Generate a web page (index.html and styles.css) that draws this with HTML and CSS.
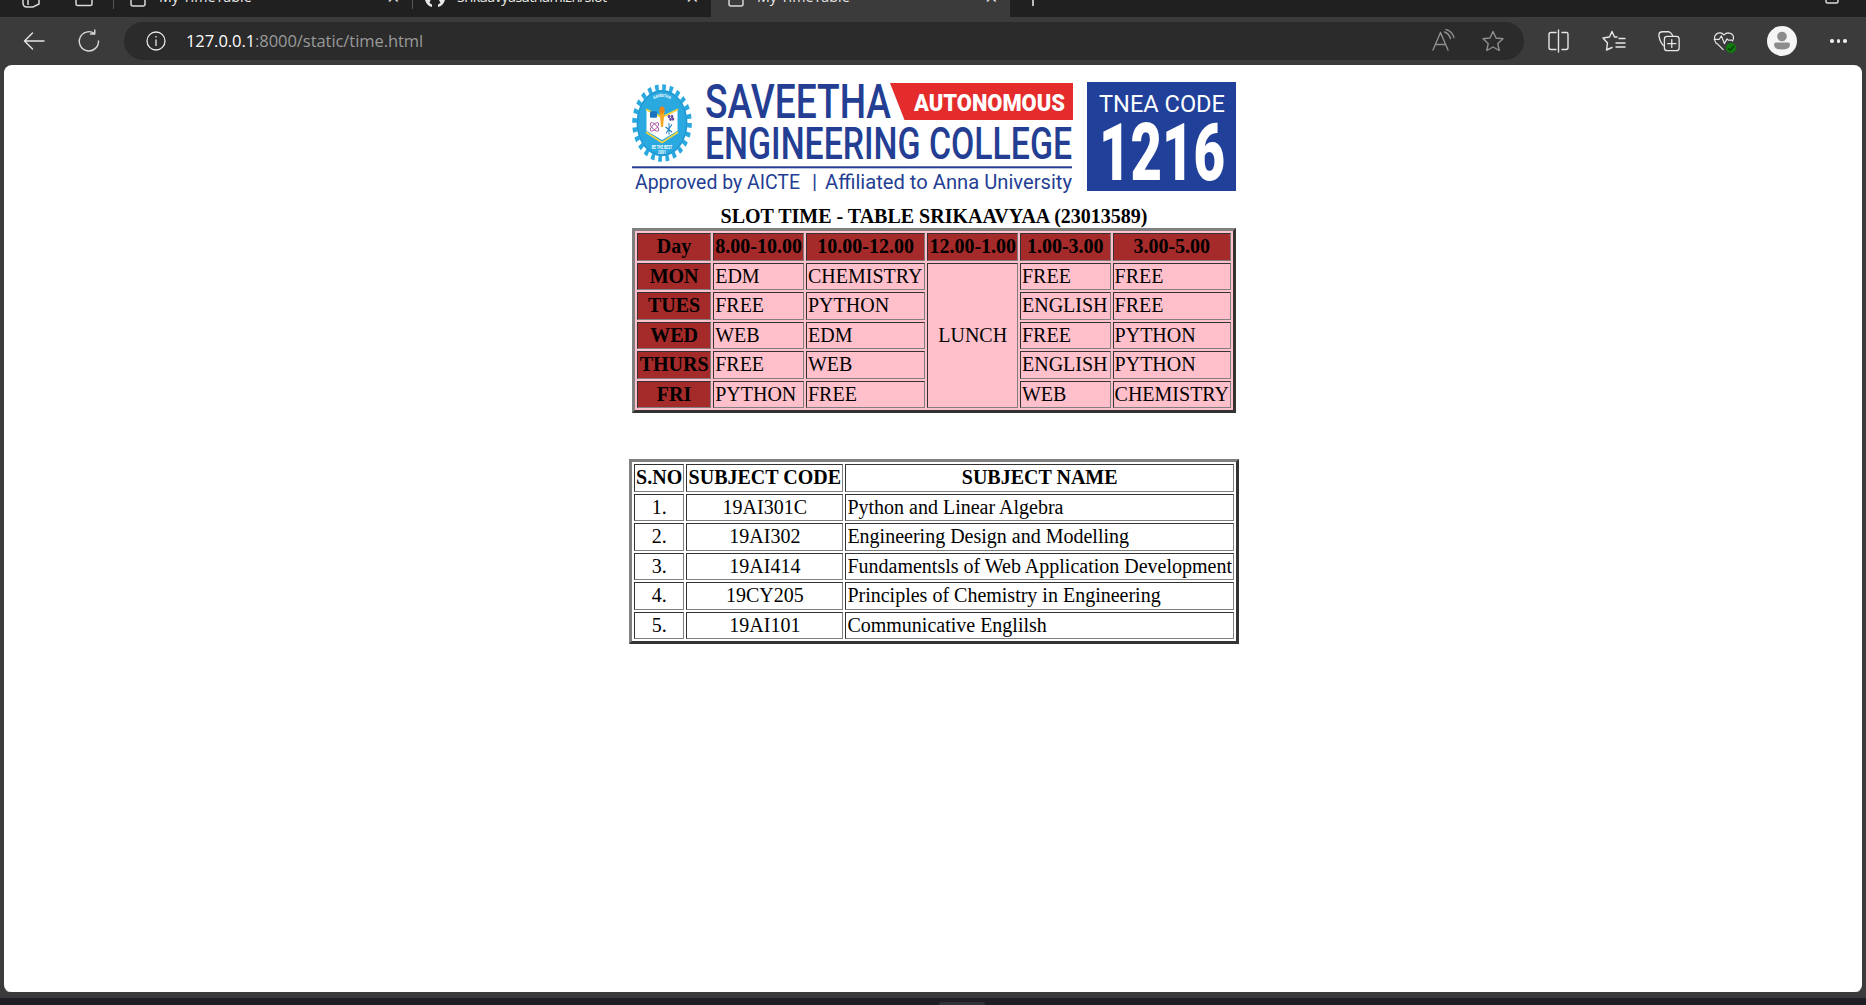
FILE: index.html
```html
<!DOCTYPE html>
<html lang="en">
<head>
<meta charset="utf-8">
<title>My TimeTable</title>
<link rel="stylesheet" href="styles.css">
</head>
<body>
<div class="tabstrip">
  <div class="strip-start">
    <svg class="cut-icon" width="24" height="17" viewBox="0 0 24 17"><path d="M4 0V3Q4 7 8 7H14L20 4V0M9 0V5" /></svg>
    <svg class="cut-icon tabs-icon" width="20" height="17" viewBox="0 0 20 17"><path d="M1 0V4Q1 5.500 2.500 5.500H15.500Q17 5.500 17 4V0" /></svg>
  </div>
  <div class="tab">
    <svg class="cut-icon" width="18" height="17" viewBox="0 0 18 17"><path d="M2 0V4Q2 6 4 6H14Q16 6 16 4V0" /></svg>
    <span class="tab-label">My TimeTable</span>
    <span class="tab-close">×</span>
  </div>
  <div class="tab tab-repo">
    <svg class="cut-icon" width="20" height="17" viewBox="0 0 20 17"><path class="solid" d="M0 0H5.500L4.500 3L7 4.500V7Q2 6 0 0ZM14 0H20Q18 6 13 7V4.500L15.500 3Z" /></svg>
    <span class="tab-label tab-label-narrow">Srikaavyasathamizh/slot</span>
    <span class="tab-close">×</span>
  </div>
  <div class="tab tab-active">
    <svg class="cut-icon" width="18" height="17" viewBox="0 0 18 17"><path d="M2 0V4Q2 6 4 6H14Q16 6 16 4V0" /></svg>
    <span class="tab-label">My TimeTable</span>
    <span class="tab-close">×</span>
  </div>
  <div class="tab-plus"></div>
  <div class="strip-end">
    <svg class="cut-icon" width="14" height="17" viewBox="0 0 14 17"><path d="M1 0V1.500Q1 3 2.500 3H11.500Q13 3 13 1.500V0" /></svg>
  </div>
</div>

<div class="toolbar">
  <svg class="tool tool-back" width="24" height="24" viewBox="0 0 24 24"><path d="M22 12H2.500M10.500 4L2.500 12L10.500 20" /></svg>
  <svg class="tool tool-reload" width="24" height="24" viewBox="0 0 24 24"><path d="M17.500 4.500A9.600 9.600 0 1 0 21.500 12M17.800 1V5H13.500" /></svg>
  <div class="address">
    <svg class="info" width="20" height="20" viewBox="0 0 20 20"><circle cx="10" cy="10" r="9" /><path d="M10 8.500V15M10 5V6.500" /></svg>
    <div class="url"><span class="url-host">127.0.0.1</span>:8000/static/time.html</div>
    <svg class="tool dim read" width="24" height="24" viewBox="0 0 24 24"><path d="M2 21L9.500 3.500L17 21M4.700 15.500H14.300M13.500 3Q18 4.500 19.500 9.500M15 0.500Q21 2 23 8.500" /></svg>
    <svg class="tool dim star" width="24" height="24" viewBox="0 0 24 24"><path d="M12 2.500L15 9L22 9.800L16.800 14.500L18.200 21.500L12 18L5.800 21.500L7.200 14.500L2 9.800L9 9Z" /></svg>
  </div>
  <svg class="tool tool-split" width="24" height="24" viewBox="0 0 24 24"><path d="M9 3.500H4Q2 3.500 2 5.500V18.500Q2 20.500 4 20.500H9M11.500 1V23M15 3.500H20Q21 3.500 21 5.500V18.500Q21 20.500 19 20.500H15" /></svg>
  <svg class="tool tool-gap" width="24" height="24" viewBox="0 0 24 24"><path d="M10 2.500L12.500 8H15M17 9.500H23M14 14H23M14 18H23M10 2.500L7.500 8L1 9L5.500 14L4.500 21L10 18.500" /></svg>
  <svg class="tool tool-gap" width="24" height="24" viewBox="-1 -1 26 26"><path d="M6 17Q2 13 1 6Q1 2 5 2L12 2Q14 2.500 16 6" /><rect x="7" y="7" width="16" height="15.500" rx="3" /><path d="M15 10.500V19M10.500 14.800H19.500" /></svg>
  <div class="health tool-gap">
    <svg class="tool" width="24" height="24" viewBox="-2 -2 28 28"><path d="M3 15Q0 11 1 7Q3 2 8 2.500Q10.500 3 12 5Q14 2.500 17 2.500Q22 3 23 7Q23.500 10 22 12M0.500 10H6.500L9 6L12.500 15L15.500 9.500L17 11H21M4 15L11 22" /></svg>
    <span class="health-badge"><svg width="10" height="10" viewBox="0 0 10 10"><path d="M2 5.300L4.200 7.300L8 3" /></svg></span>
  </div>
  <div class="avatar"><svg width="30" height="30" viewBox="0 0 30 30"><circle cx="15" cy="10.500" r="4.800" /><path d="M7 18.500Q7 16.500 9 16.500H21Q23 16.500 23 18.500Q23 23.500 15 23.500Q7 23.500 7 18.500Z" /></svg></div>
  <div class="dots"><i></i><i></i><i></i></div>
</div>

<main class="page">
  <svg class="logo" width="604" height="109" viewBox="0 0 604 109" role="img" aria-label="Saveetha Engineering College">
    <g class="emblem" transform="translate(30 41) scale(1 1.300)">
      <circle class="gear-teeth" r="27.300" />
      <circle class="gear" r="25.500" />
      <circle class="gear-line" r="24.500" />
      <path class="page-left" d="M-15.500 -10L0 -4L0 13L-15.500 6Z" />
      <path class="page-right" d="M15.500 -10L0 -4L0 13L15.500 6Z" />
      <path class="chevron" d="M-16 7L0 15L16 7M-16 -10.500L0 -4.500L16 -10.500" />
      <rect class="mon" x="-12" y="-9" width="7" height="5" rx="1" />
      <path class="torch" d="M-2.500 -9H2.500L1 3H-1Z" />
      <circle class="torch-top" cy="-10" r="2.600" />
      <circle class="grape" cx="7" cy="-5" r="1.300" /><circle class="grape" cx="10" cy="-5" r="1.300" /><circle class="grape" cx="8.500" cy="-2.800" r="1.300" /><circle class="grape" cx="11" cy="-3" r="1.300" />
      <ellipse class="atom" cx="-7.500" cy="3" rx="5" ry="2" transform="rotate(35 -7.500 3)" />
      <ellipse class="atom" cx="-7.500" cy="3" rx="5" ry="2" transform="rotate(-35 -7.500 3)" />
      <path class="flake" d="M3.500 3L10 7M10 1L4 8M7 0V9" />
      <path id="arcTop" class="none" d="M-20 0A20 20 0 0 1 20 0" />
      <text class="emblem-text"><textPath href="#arcTop" startOffset="50%">SAVEETHA</textPath></text>
      <text class="emblem-text" y="20" x="0">BE THE BEST</text>
      <text class="emblem-text" y="23.800" x="0">2001</text>
    </g>
    <text class="logo-blue" x="73" y="36.300" font-size="48" textLength="186" lengthAdjust="spacingAndGlyphs">SAVEETHA</text>
    <path class="logo-red" d="M258 1H441V38H272.500Z" />
    <text class="logo-white logo-heavy" x="282" y="28.700" font-size="24" textLength="151" lengthAdjust="spacingAndGlyphs">AUTONOMOUS</text>
    <text class="logo-blue" x="73" y="77.300" font-size="45" textLength="367" lengthAdjust="spacingAndGlyphs">ENGINEERING COLLEGE</text>
    <rect class="logo-rule" x="0" y="84.300" width="440" height="2" />
    <text class="logo-blue logo-thin" x="3" y="107" font-size="21" textLength="165" lengthAdjust="spacingAndGlyphs">Approved by AICTE</text>
    <text class="logo-blue logo-thin" x="180" y="107" font-size="21">|</text>
    <text class="logo-blue logo-thin" x="193" y="107" font-size="21" textLength="247" lengthAdjust="spacingAndGlyphs">Affiliated to Anna University</text>
    <rect class="logo-box" x="455" y="0" width="149" height="109" />
    <text class="logo-white" x="467" y="29.700" font-size="23.500" textLength="126" lengthAdjust="spacingAndGlyphs">TNEA CODE</text>
    <text class="logo-white logo-heavy" x="467" y="98" font-size="80" textLength="126" lengthAdjust="spacingAndGlyphs">1216</text>
  </svg>

  <h1 class="slot-title">SLOT TIME - TABLE SRIKAAVYAA (23013589)</h1>

  <table class="grid slot">
    <colgroup><col class="s1"><col class="s2"><col class="s3"><col class="s4"><col class="s5"><col class="s6"></colgroup>
    <tr><th>Day</th><th>8.00-10.00</th><th>10.00-12.00</th><th>12.00-1.00</th><th>1.00-3.00</th><th>3.00-5.00</th></tr>
    <tr><th>MON</th><td>EDM</td><td>CHEMISTRY</td><td rowspan="5" class="lunch">LUNCH</td><td>FREE</td><td>FREE</td></tr>
    <tr><th>TUES</th><td>FREE</td><td>PYTHON</td><td>ENGLISH</td><td>FREE</td></tr>
    <tr><th>WED</th><td>WEB</td><td>EDM</td><td>FREE</td><td>PYTHON</td></tr>
    <tr><th>THURS</th><td>FREE</td><td>WEB</td><td>ENGLISH</td><td>PYTHON</td></tr>
    <tr><th>FRI</th><td>PYTHON</td><td>FREE</td><td>WEB</td><td>CHEMISTRY</td></tr>
  </table>

  <table class="grid subjects">
    <colgroup><col class="c1"><col class="c2"><col class="c3"></colgroup>
    <tr><th>S.NO</th><th>SUBJECT CODE</th><th>SUBJECT NAME</th></tr>
    <tr><td class="mid">1.</td><td class="mid">19AI301C</td><td>Python and Linear Algebra</td></tr>
    <tr><td class="mid">2.</td><td class="mid">19AI302</td><td>Engineering Design and Modelling</td></tr>
    <tr><td class="mid">3.</td><td class="mid">19AI414</td><td>Fundamentsls of Web Application Development</td></tr>
    <tr><td class="mid">4.</td><td class="mid">19CY205</td><td>Principles of Chemistry in Engineering</td></tr>
    <tr><td class="mid">5.</td><td class="mid">19AI101</td><td>Communicative Englilsh</td></tr>
  </table>
</main>

<div class="bottom-band"></div>
<div class="taskbar"><div class="task-notch"></div></div>
</body>
</html>
```
FILE: styles.css
```css
* { box-sizing: border-box; }
html, body { margin: 0; height: 100%; }
body {
  display: flex;
  flex-direction: column;
  height: 1005px;
  overflow: hidden;
  background: #3b3b3b;
  font-family: "Liberation Serif", serif;
}

/* Tab strip, cut off by the top of the window */
.tabstrip {
  display: flex;
  height: 17px;
  flex: none;
  overflow: hidden;
  align-items: flex-start;
  background: #202020;
  font-family: "Open Sans", sans-serif;
  color: #e8e8e8;
}
.cut-icon { flex: none; fill: none; stroke: #d8d8d8; stroke-width: 1.5; }
.cut-icon .solid { fill: #e8e8e8; stroke: none; }
.strip-start { display: flex; width: 113px; padding-left: 19px; gap: 32px; flex: none; }
.tab {
  display: flex;
  width: 299px;
  height: 17px;
  flex: none;
  padding-left: 15px;
  gap: 12px;
  border-left: 1px solid #555;
  border-image: linear-gradient(#555 9px, transparent 9px) 1;
}
.tab-repo { padding-left: 12px; }
.tab-active {
  background: #3b3b3b;
  border-left: 0;
  border-image: none;
  padding-left: 16px;
}
.tab-label {
  font-size: 14.300px;
  line-height: 20px;
  margin-top: -13px;
  flex: 1;
  white-space: nowrap;
}
.tab-label-narrow { letter-spacing: -0.500px; }
.tab-close {
  font-size: 22px;
  line-height: 22px;
  margin-top: -15px;
  width: 25px;
  color: #ddd;
}
.tab-plus {
  width: 2px;
  height: 6px;
  margin-left: 22px;
  flex: none;
  background: #bbb;
}
.strip-end { margin-left: auto; margin-right: 27px; flex: none; }

/* Toolbar */
.toolbar {
  display: flex;
  align-items: center;
  height: 48px;
  flex: none;
  padding-left: 22px;
  background: #3b3b3b;
}
.tool { flex: none; fill: none; stroke: #e6e6e6; stroke-width: 1.400; stroke-linecap: round; stroke-linejoin: round; }
.tool.dim { stroke: #8f8f8f; }
.tool-reload { margin-left: 31px; stroke: #d8d8d8; }
.address {
  display: flex;
  align-items: center;
  width: 1400px;
  height: 38px;
  flex: none;
  margin-left: 23px;
  padding: 0 19px 0 22px;
  border-radius: 19px;
  background: #2b2b2b;
}
.info { flex: none; fill: none; stroke: #e8e8e8; stroke-width: 1.300; }
.url {
  margin-left: 20px;
  margin-bottom: 2px;
  flex: 1;
  font-family: "Open Sans", sans-serif;
  font-size: 16.500px;
  letter-spacing: -0.060px;
  color: #9a9a9a;
  white-space: nowrap;
}
.url-host { color: #fff; }
.star { margin-left: 26px; }
.tool-split { margin-left: 23px; }
.tool-gap { margin-left: 31px; }
.health { position: relative; width: 24px; height: 24px; flex: none; }
.health .tool { display: block; }
.health-badge {
  position: absolute;
  right: 0;
  bottom: 0;
  width: 10px;
  height: 10px;
  display: flex;
  align-items: center;
  justify-content: center;
  border-radius: 50%;
  background: #107c10;
}
.health-badge svg { fill: none; stroke: #0b3f0b; stroke-width: 1.500; }
.avatar {
  width: 30px;
  height: 30px;
  margin-left: 31px;
  flex: none;
  border-radius: 50%;
  background: #f5f5f5;
}
.avatar svg { display: block; fill: #8c8c8c; }
.dots { display: flex; gap: 3.200px; margin-left: 33px; flex: none; }
.dots i { width: 3.500px; height: 3.500px; border-radius: 50%; background: #eee; }

/* Page */
.page {
  display: flex;
  flex-direction: column;
  align-items: center;
  height: 927px;
  flex: none;
  margin: 0 4px;
  padding: 17px 0 0 2px;
  border-radius: 8px;
  background: #fff;
  box-shadow: 0 1px 0 #bdbdbd;
}
.logo { display: block; flex: none; overflow: visible; }
.logo text { font-family: Roboto, sans-serif; }
.logo-blue { fill: #233e93; font-weight: 500; }
.logo .logo-thin { font-weight: 400; }
.logo-white { fill: #fff; font-weight: 400; }
.logo .logo-heavy { font-weight: 900; }
.logo-red { fill: #e32c2b; }
.logo-rule { fill: #233e93; }
.logo-box { fill: #21409a; }
.gear-teeth { fill: none; stroke: #29a9e0; stroke-width: 5; stroke-dasharray: 3.600 3.550; }
.gear { fill: #29a9e0; }
.gear-line { fill: none; stroke: #1b75bb; stroke-width: 0.400; }
.page-left, .page-right { fill: #fff; }
.chevron { fill: none; stroke: #f7d33c; stroke-width: 1.500; }
.mon { fill: #1c75bc; }
.torch { fill: #f7a823; }
.torch-top { fill: #e8861d; }
.grape { fill: #6c4a9e; }
.atom { fill: none; stroke: #a2469a; stroke-width: 0.700; }
.flake { fill: none; stroke: #2484c6; stroke-width: 1; }
.none { fill: none; }
.logo .emblem-text { font-size: 3.400px; fill: #fff; font-weight: 700; text-anchor: middle; }

.slot-title {
  margin: 14px 0 0;
  font-size: 20px;
  line-height: 23px;
  font-weight: 700;
  text-align: center;
  color: #000;
}
.grid {
  table-layout: fixed;
  border-collapse: separate;
  border-spacing: 2px;
  border-width: 3px;
  border-style: solid;
  border-color: #808080 #333 #333 #808080;
  font-size: 20px;
  color: #000;
}
.grid th, .grid td {
  padding: 0 1px;
  border: 1px solid;
  border-color: #333 #808080 #808080 #333;
  line-height: 25.500px;
  white-space: nowrap;
  overflow: hidden;
}
.grid th { text-align: center; font-weight: 700; }
.grid td { text-align: left; }
.grid td.mid, .grid td.lunch { text-align: center; }
.slot { width: 604px; background: #ffc0cb; }
.slot th { background: #a52a2a; }
.slot td { background: #ffc0cb; }
.s1 { width: 74.200px; }
.s2 { width: 90.800px; }
.s3 { width: 119.400px; }
.s4 { width: 90.600px; }
.s5 { width: 90.600px; }
.s6 { width: 118.400px; }
.subjects { width: 610px; margin-top: 46px; background: #fff; }
.c1 { width: 50.300px; }
.c2 { width: 157.100px; }
.c3 { width: 388.600px; }

.bottom-band { height: 6px; flex: none; background: #3b3b3b; }
.taskbar { flex: 1; display: flex; justify-content: center; background: #1f1e24; overflow: hidden; }
.task-notch { width: 46px; height: 4px; margin: 4px 0 0 58px; background: #33323a; border-radius: 3px 3px 0 0; }
```
